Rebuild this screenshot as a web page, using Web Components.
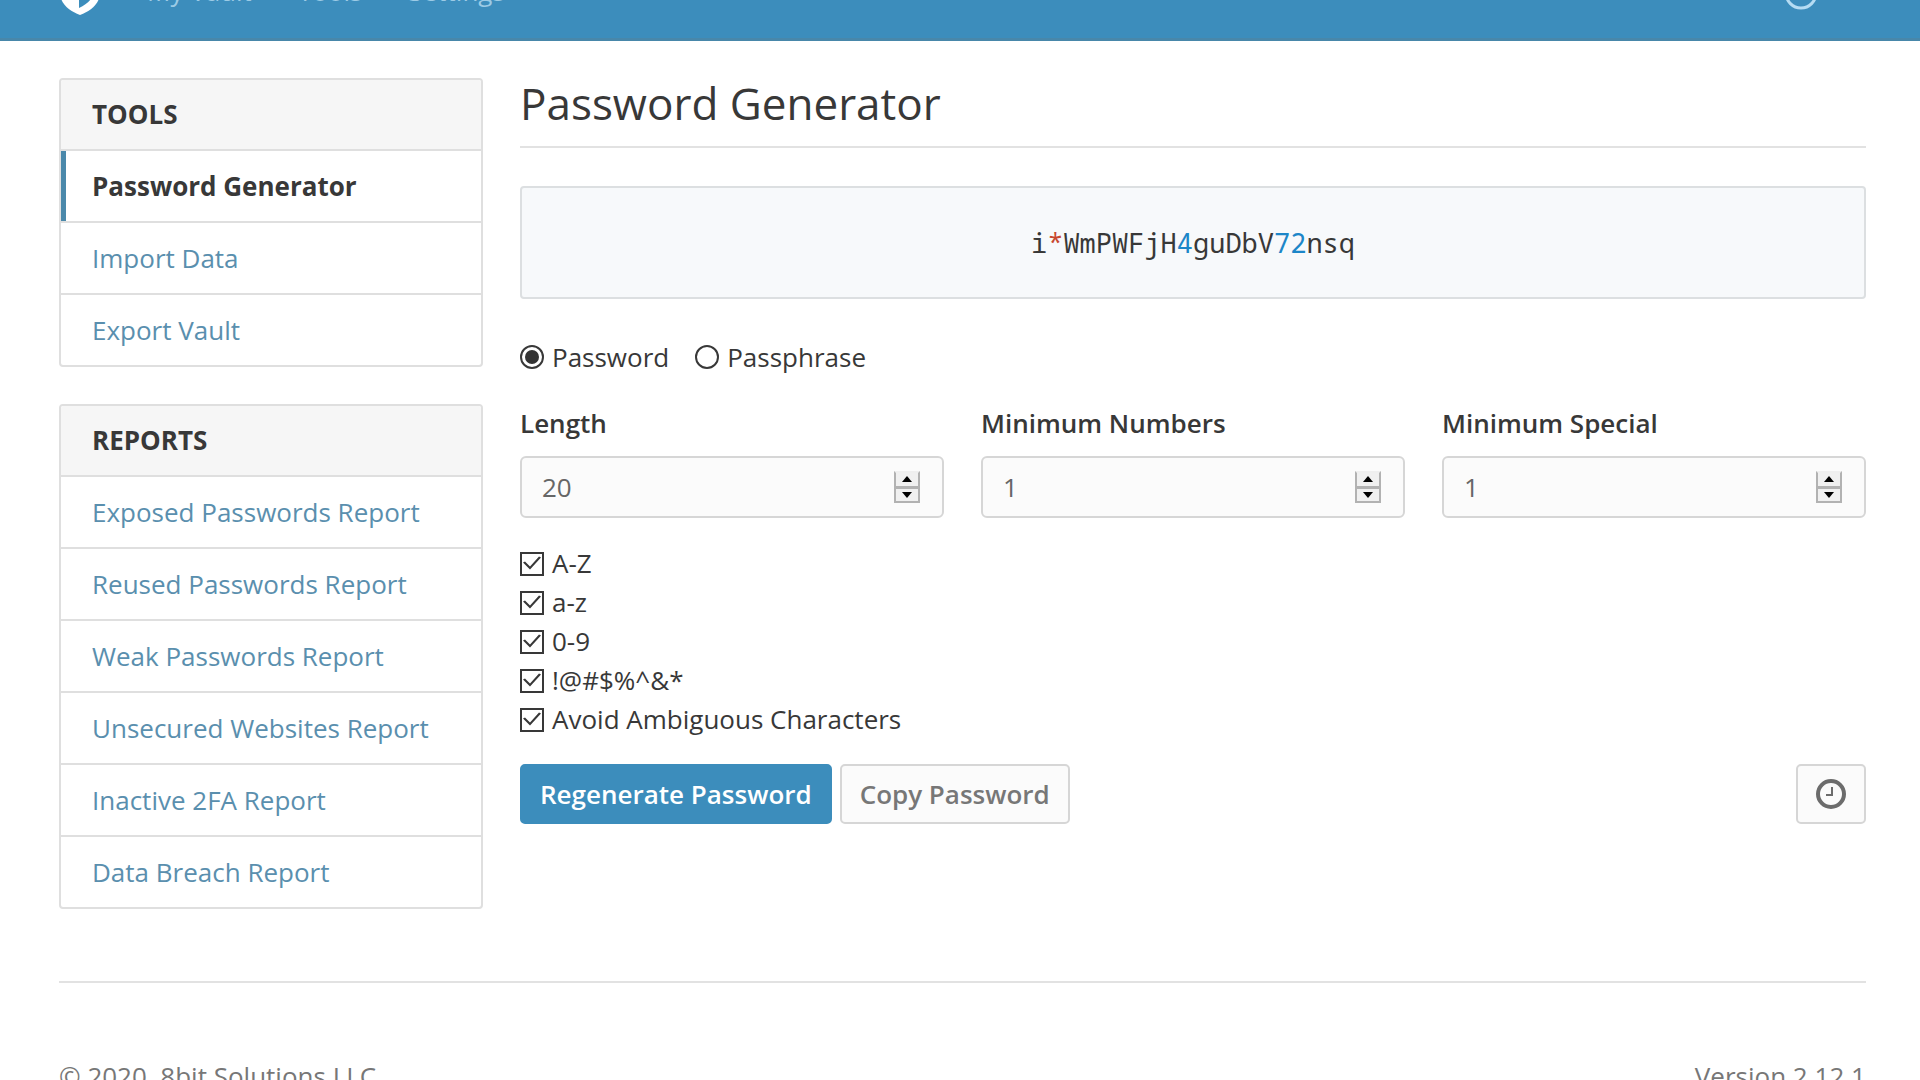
<!DOCTYPE html>
<html lang="en">
<head>
<meta charset="utf-8">
<title>Password Generator</title>
<style>
  * { box-sizing: border-box; }
  html, body { margin: 0; }
  body { background: #fff; color: #383838; font: 26px/38px "Open Sans", "Noto Sans", sans-serif; overflow-x: hidden; }
  html { overflow-y: hidden; }
</style>
</head>
<body>
<vault-app></vault-app>

<script>
const define = (name, html, setup) => {
  const template = document.createElement('template');
  template.innerHTML = '<style>*{box-sizing:border-box}:host{box-sizing:border-box}</style>' + html;
  customElements.define(name, class extends HTMLElement {
    constructor() {
      super();
      this.attachShadow({ mode: 'open' }).append(template.content.cloneNode(true));
    }
    connectedCallback() {
      if (setup && !this.ready) { this.ready = true; setup(this, this.shadowRoot); }
    }
  });
};

define('vault-header', `
<style>
  :host { display: block; background: #3c8dbc; border-bottom: 3px solid #4887aa; height: 41px; overflow: hidden; padding: 0 60px; }
  nav { display: flex; align-items: flex-end; height: 100%; padding-bottom: 23px; }
  .logo { display: flex; margin-right: 47px; }
  .links { display: flex; gap: 46px; line-height: 36px; padding-bottom: 6px; }
  a { color: #9ccbe6; text-decoration: none; }
  .account { display: flex; margin: 0 42px 5px auto; }
  svg { display: block; }
</style>
<nav aria-label="Main">
  <a class="logo" href="#" aria-label="Vault home">
    <svg width="40" height="50" viewBox="0 0 40 50"><path fill="#fff" d="M2 0h36a2 2 0 0 1 2 2v26c0 10-9 18-20 22C9 46 0 38 0 28V2a2 2 0 0 1 2-2z"/><path fill="#3c8dbc" d="M19 7h14v21c0 6-6 11-14 15z"/></svg>
  </a>
  <div class="links"><a href="#">My Vault</a><a href="#">Tools</a><a href="#">Settings</a></div>
  <a class="account" href="#" aria-label="Account">
    <svg width="34" height="34" viewBox="0 0 34 34" fill="none" stroke="#b5dcf3" stroke-width="3"><circle cx="17" cy="17" r="15"/></svg>
  </a>
</nav>`);

define('side-panel', `
<style>
  :host { display: block; border: 2px solid #dfdfdf; border-radius: 4px; overflow: hidden; }
  h2 { margin: 0; padding: 15px 31px 16px; background: #f6f6f6; font-size: 26px; line-height: 38px; font-weight: 700; text-transform: uppercase; }
</style>
<h2></h2><slot></slot>`, (host, root) => {
  root.querySelector('h2').textContent = host.getAttribute('heading');
});

define('side-link', `
<style>
  :host { display: block; border-top: 2px solid #dfdfdf; }
  a { display: block; padding: 16px 31px; color: #5a8fae; text-decoration: none; }
  :host([active]) a { color: #383838; font-weight: 700; border-left: 5px solid #4a88aa; padding-left: 26px; }
</style>
<a href="#"><slot></slot></a>`);

define('number-field', `
<style>
  :host { display: block; }
  label { display: block; font-weight: 600; line-height: 38px; margin-bottom: 14px; }
  .box { display: flex; align-items: center; height: 62px; padding: 0 22px 0 20px; border: 2px solid #d6d6d6; border-radius: 6px; background: #fbfbfb; }
  input { flex: 1; min-width: 0; width: 0; border: 0; padding: 0; outline: 0; background: none; font: inherit; color: #666; appearance: textfield; -moz-appearance: textfield; }
  input::-webkit-inner-spin-button, input::-webkit-outer-spin-button { appearance: none; margin: 0; }
  .steps { display: flex; flex-direction: column; width: 26px; height: 32px; border: 2px solid #b2b2b2; border-top-color: #efefef; background: #f0f0f0; }
  button { flex: 1; display: flex; align-items: center; justify-content: center; padding: 0; border: 0; background: none; }
  button + button { border-top: 3px solid #b2b2b2; }
  svg { display: block; }
</style>
<label for="value"></label>
<div class="box">
  <input id="value" type="number">
  <div class="steps">
    <button type="button" aria-label="Increase"><svg width="10" height="6" viewBox="0 0 10 6"><path d="M5 0l5 6H0z"/></svg></button>
    <button type="button" aria-label="Decrease"><svg width="10" height="6" viewBox="0 0 10 6"><path d="M5 6l5-6H0z"/></svg></button>
  </div>
</div>`, (host, root) => {
  const input = root.querySelector('input');
  root.querySelector('label').textContent = host.getAttribute('label');
  input.value = host.getAttribute('value');
  const [up, down] = root.querySelectorAll('button');
  up.onclick = () => input.stepUp();
  down.onclick = () => input.stepDown();
});

define('check-option', `
<style>
  :host { display: block; }
  label { display: flex; align-items: center; gap: 8px; line-height: 39px; }
  input { appearance: none; flex: none; width: 24px; height: 24px; margin: 0; border: 2px solid #383838; background: #fff; }
  input:checked::before { content: ""; display: block; width: 20px; height: 20px; background: #383838; clip-path: polygon(1px 9px, 3px 8px, 8px 13px, 17px 3px, 19px 4px, 8px 16px); }
</style>
<label><input type="checkbox" checked><span><slot></slot></span></label>`);

define('mode-picker', `
<style>
  :host { display: flex; gap: 26px; }
  label { display: flex; align-items: center; gap: 8px; }
  input { appearance: none; flex: none; display: grid; place-items: center; width: 24px; height: 24px; margin: 0; border: 2px solid #383838; border-radius: 50%; background: #fff; }
  input:checked::before { content: ""; width: 14px; height: 14px; border-radius: 50%; background: #333; }
</style>
<label><input type="radio" name="mode" checked>Password</label>
<label><input type="radio" name="mode">Passphrase</label>`);

define('vault-button', `
<style>
  :host { display: block; }
  button { display: flex; align-items: center; justify-content: center; height: 60px; padding: 0 18px; border: 2px solid #d6d6d6; border-radius: 5px; background: #fbfbfb; color: #777; font: inherit; font-weight: 600; }
  :host([primary]) button { background: #3c8dbc; border-color: #3c8dbc; color: #fff; }
</style>
<button type="button"><slot></slot></button>`, (host, root) => {
  const name = host.getAttribute('label');
  if (name) root.querySelector('button').setAttribute('aria-label', name);
});

define('password-output', `
<style>
  :host { display: flex; align-items: center; justify-content: center; height: 113px; border: 2px solid #dcdfe1; border-radius: 4px; background: #f7f9fb; font: 27px/38px "Noto Sans Mono", "DejaVu Sans Mono", monospace; }
  .special { color: #c8472f; }
  .digit { color: #1c86c8; }
</style>
<span class="text"></span>`, (host, root) => {
  const out = root.querySelector('.text');
  for (const part of host.getAttribute('value').match(/[a-z]+|\d+|[^a-z\d]+/gi)) {
    const span = document.createElement('span');
    span.textContent = part;
    span.className = /\d/.test(part) ? 'digit' : /[a-z]/i.test(part) ? '' : 'special';
    out.append(span);
  }
});

define('password-generator', `
<style>
  :host { display: block; }
  h1 { margin: 0 0 38px; padding-bottom: 18px; border-bottom: 2px solid #e2e2e2; font-size: 44px; line-height: 50px; font-weight: 400; }
  mode-picker { margin: 39px 0 28px; }
  .numbers { display: grid; grid-template-columns: repeat(3, 1fr); gap: 37px; margin-bottom: 26px; }
  .actions { display: flex; gap: 8px; margin-top: 25px; }
  .history { margin-left: auto; }
  svg { display: block; }
</style>
<h1>Password Generator</h1>
<password-output value="i*WmPWFjH4guDbV72nsq"></password-output>
<mode-picker></mode-picker>
<div class="numbers">
  <number-field label="Length" value="20"></number-field>
  <number-field label="Minimum Numbers" value="1"></number-field>
  <number-field label="Minimum Special" value="1"></number-field>
</div>
<check-option>A-Z</check-option>
<check-option>a-z</check-option>
<check-option>0-9</check-option>
<check-option>!@#$%^&amp;*</check-option>
<check-option>Avoid Ambiguous Characters</check-option>
<div class="actions">
  <vault-button primary>Regenerate Password</vault-button>
  <vault-button>Copy Password</vault-button>
  <vault-button class="history" label="Password History"><svg width="30" height="30" viewBox="0 0 30 30" fill="none" stroke="#6c6c6c"><circle cx="15" cy="15" r="13" stroke-width="4"/><path d="M16 8v8h-6" stroke-width="2"/></svg></vault-button>
</div>`);

define('vault-footer', `
<style>
  :host { display: flex; justify-content: space-between; margin: 72px 54px 0 59px; padding-top: 74px; border-top: 2px solid #e2e2e2; color: #777; height: 130px; }
</style>
<span>© 2020, 8bit Solutions LLC</span><span>Version 2.12.1</span>`);

define('vault-app', `
<style>
  :host { display: block; }
  .page { display: flex; gap: 37px; padding: 37px 54px 0 59px; align-items: flex-start; }
  aside { flex: 0 0 424px; display: grid; gap: 37px; }
  password-generator { flex: 1; min-width: 0; }
</style>
<vault-header></vault-header>
<main class="page">
  <aside>
    <side-panel heading="Tools">
      <side-link active>Password Generator</side-link>
      <side-link>Import Data</side-link>
      <side-link>Export Vault</side-link>
    </side-panel>
    <side-panel heading="Reports">
      <side-link>Exposed Passwords Report</side-link>
      <side-link>Reused Passwords Report</side-link>
      <side-link>Weak Passwords Report</side-link>
      <side-link>Unsecured Websites Report</side-link>
      <side-link>Inactive 2FA Report</side-link>
      <side-link>Data Breach Report</side-link>
    </side-panel>
  </aside>
  <password-generator></password-generator>
</main>
<vault-footer></vault-footer>`);
</script>
</body>
</html>
